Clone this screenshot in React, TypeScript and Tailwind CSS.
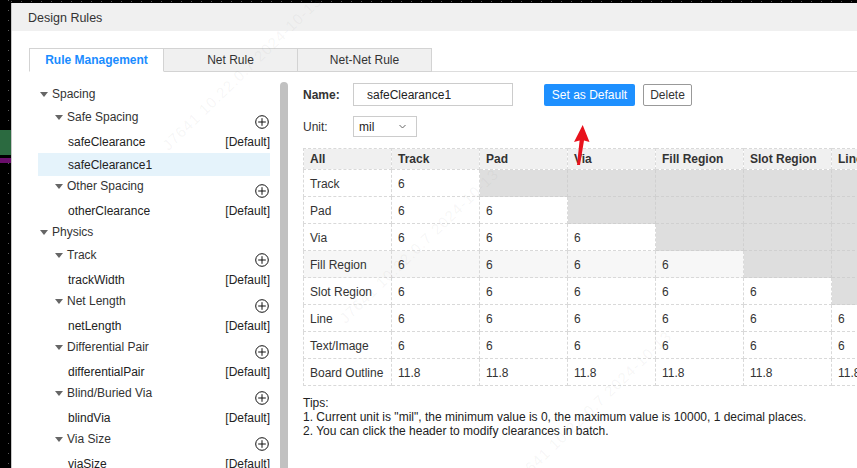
import React from 'react';

type TreeItem = {
  label: string;
  kind: 'root' | 'group' | 'leaf';
  isDefault?: boolean;
  active?: boolean;
};

const tree: TreeItem[] = [
  { label: 'Spacing', kind: 'root' },
  { label: 'Safe Spacing', kind: 'group' },
  { label: 'safeClearance', kind: 'leaf', isDefault: true },
  { label: 'safeClearance1', kind: 'leaf', active: true },
  { label: 'Other Spacing', kind: 'group' },
  { label: 'otherClearance', kind: 'leaf', isDefault: true },
  { label: 'Physics', kind: 'root' },
  { label: 'Track', kind: 'group' },
  { label: 'trackWidth', kind: 'leaf', isDefault: true },
  { label: 'Net Length', kind: 'group' },
  { label: 'netLength', kind: 'leaf', isDefault: true },
  { label: 'Differential Pair', kind: 'group' },
  { label: 'differentialPair', kind: 'leaf', isDefault: true },
  { label: 'Blind/Buried Via', kind: 'group' },
  { label: 'blindVia', kind: 'leaf', isDefault: true },
  { label: 'Via Size', kind: 'group' },
  { label: 'viaSize', kind: 'leaf', isDefault: true },
];

const objects = ['Track', 'Pad', 'Via', 'Fill Region', 'Slot Region', 'Line', 'Text/Image', 'Board Outline'];

const Caret = () => (
  <span className="mt-[8px] h-0 w-0 shrink-0 border-x-[4px] border-t-[5px] border-x-transparent border-t-[#666]" />
);

const PlusCircle = () => (
  <svg width="14" height="14" viewBox="0 0 14 14" className="mr-[1px] mt-[8px] shrink-0">
    <circle cx="7" cy="7" r="6.3" fill="none" stroke="#111" strokeWidth="1" />
    <path d="M7 3.2V10.8M3.2 7H10.8" stroke="#111" strokeWidth="1" />
  </svg>
);

const Watermark = ({ className }: { className: string }) => (
  <span
    className={`pointer-events-none absolute -rotate-[44deg] whitespace-nowrap text-[15px] tracking-[1px] text-[#808080]/[0.08] ${className}`}
  >
    J7641 10.22.0.7 2024-10-13
  </span>
);

export default function App() {
  return (
    <div className="relative flex h-[468px] w-[857px] overflow-hidden bg-black font-['Liberation_Sans',Arial,sans-serif] text-[12px] text-[#333]">
      {/* canvas edge behind the dialog */}
      <div className="flex w-[11px] shrink-0 flex-col">
        <div className="flex h-[130px] shrink-0 justify-end pr-[2px]">
          <div className="w-px bg-[repeating-linear-gradient(to_bottom,#5a5a5a_0_1px,transparent_1px_10px)]" />
        </div>
        <div className="h-[25px] shrink-0 bg-[#2b6a40]" />
        <div className="h-[3px] shrink-0" />
        <div className="h-[5px] shrink-0 bg-[#6a0e6c]" />
        <div className="flex flex-1 justify-end pr-[2px]">
          <div className="w-px bg-[repeating-linear-gradient(to_bottom,#5a5a5a_0_1px,transparent_1px_10px)]" />
        </div>
      </div>

      <div className="flex min-h-0 min-w-0 flex-1 flex-col">
        <div className="h-[3px] shrink-0 pt-px">
          <div className="h-px bg-[repeating-linear-gradient(to_right,#5a5a5a_0_1px,transparent_1px_10px)]" />
        </div>

        <div className="flex min-h-0 flex-1 flex-col border-l border-[#c8c8c8] bg-white">
          <div className="flex h-[28px] shrink-0 items-center bg-[#f0f0f0] pl-[16px] pt-[2px] text-[12.5px] text-[#333]">
            Design Rules
          </div>

          <div className="flex min-h-0 flex-1 flex-col pl-[17px] pt-[17px]">
            <div className="flex shrink-0 border-b border-[#ddd]">
              <div className="-mb-px flex h-[24px] w-[135px] items-center justify-center border border-[#d3d3d3] border-b-white bg-white font-bold text-[#1a8cff]">
                Rule Management
              </div>
              <div className="-mb-px flex h-[24px] w-[134px] items-center justify-center border-y border-r border-[#d3d3d3] bg-[#f0f0f0]">
                Net Rule
              </div>
              <div className="-mb-px flex h-[24px] w-[134px] items-center justify-center border-y border-r border-[#d3d3d3] bg-[#f0f0f0]">
                Net-Net Rule
              </div>
            </div>

            <div className="mt-[10px] flex min-h-0 flex-1">
              <div className="w-[241px] shrink-0 pt-[2px]">
                {tree.map((item) => {
                  if (item.kind === 'leaf') {
                    return (
                      <div
                        key={item.label}
                        className={`ml-[9px] flex h-[23px] items-center justify-between pl-[30px] text-[#222] ${item.active ? 'bg-[#e5f3fb]' : ''}`}
                      >
                        <span>{item.label}</span>
                        {item.isDefault && <span>[Default]</span>}
                      </div>
                    );
                  }
                  return (
                    <div
                      key={item.label}
                      className={`flex h-[23px] items-start ${item.kind === 'root' ? 'pl-[11px]' : 'pl-[26px]'}`}
                    >
                      <Caret />
                      <span className="ml-[4px] flex-1 leading-[20px]">{item.label}</span>
                      {item.kind === 'group' && <PlusCircle />}
                    </div>
                  );
                })}
              </div>

              <div className="ml-[10px] w-[8px] shrink-0 rounded-t-[4px] bg-[#c1c1c1]" />

              <div className="min-w-0 flex-1 overflow-hidden pl-[15px] pt-px">
                <div className="flex h-[23px] items-center">
                  <span className="w-[50px] font-bold">Name:</span>
                  <div className="flex h-[23px] w-[160px] items-center border border-[#ccc] pl-[13px] text-[#222]">
                    safeClearance1
                  </div>
                  <button className="ml-[31px] h-[22px] w-[91px] rounded-[2px] bg-[#1e90ff] text-white">
                    Set as Default
                  </button>
                  <button className="ml-[8px] h-[22px] w-[49px] rounded-[2px] border border-[#999] bg-white text-[#333]">
                    Delete
                  </button>
                </div>

                <div className="mt-[10px] flex h-[21px] items-center">
                  <span className="w-[50px]">Unit:</span>
                  <div className="flex h-[21px] w-[64px] items-center justify-between border border-[#ccc] pl-[5px] pr-[10px] text-[#222]">
                    <span>mil</span>
                    <svg width="7" height="5" viewBox="0 0 7 5">
                      <path d="M0.5 1L3.5 4L6.5 1" fill="none" stroke="#666" strokeWidth="1" />
                    </svg>
                  </div>
                </div>

                <table className="mt-[11px] w-[792px] table-fixed border-collapse">
                  <thead>
                    <tr>
                      {['All', ...objects].map((h) => (
                        <th
                          key={h}
                          className="h-[21px] w-[88px] overflow-hidden whitespace-nowrap border border-dashed border-[#d9d9d9] bg-[#f0f0f0] pl-[6px] text-left font-bold"
                        >
                          {h}
                        </th>
                      ))}
                    </tr>
                  </thead>
                  <tbody>
                    {objects.map((row, i) => (
                      <tr key={row}>
                        <td
                          className={`h-[27px] whitespace-nowrap border border-dashed border-[#d9d9d9] pl-[6px] pt-[2px] ${i === 3 ? 'bg-[#f7f7f7]' : 'bg-white'}`}
                        >
                          {row}
                        </td>
                        {objects.map((col, j) =>
                          j <= i ? (
                            <td
                              key={col}
                              className={`h-[27px] border border-dashed border-[#d9d9d9] pl-[6px] pt-[2px] ${i === 3 ? 'bg-[#f7f7f7]' : 'bg-white'}`}
                            >
                              {i === 7 ? '11.8' : '6'}
                            </td>
                          ) : (
                            <td key={col} className="h-[27px] border border-dashed border-[#d0d0d0] bg-[#dedede]" />
                          )
                        )}
                      </tr>
                    ))}
                  </tbody>
                </table>

                <div className="mt-[10px] leading-[14px] text-[#222]">
                  <div>Tips:</div>
                  <div>1. Current unit is "mil", the minimum value is 0, the maximum value is 10000, 1 decimal places.</div>
                  <div>2. You can click the header to modify clearances in batch.</div>
                </div>
              </div>
            </div>
          </div>
        </div>
      </div>

      <Watermark className="left-[135px] top-[62px]" />
      <Watermark className="left-[312px] top-[235px]" />
      <Watermark className="left-[485px] top-[397px]" />
      <Watermark className="left-[-200px] top-[387px]" />

      {/* annotation arrow */}
      <svg width="24" height="48" viewBox="0 0 24 48" className="pointer-events-none absolute left-[570px] top-[120px]">
        <polygon points="12.7,5 19.5,22 14,20.5 10,45 7,45 9.6,20.5 4,22" fill="#e8121c" />
      </svg>
    </div>
  );
}
